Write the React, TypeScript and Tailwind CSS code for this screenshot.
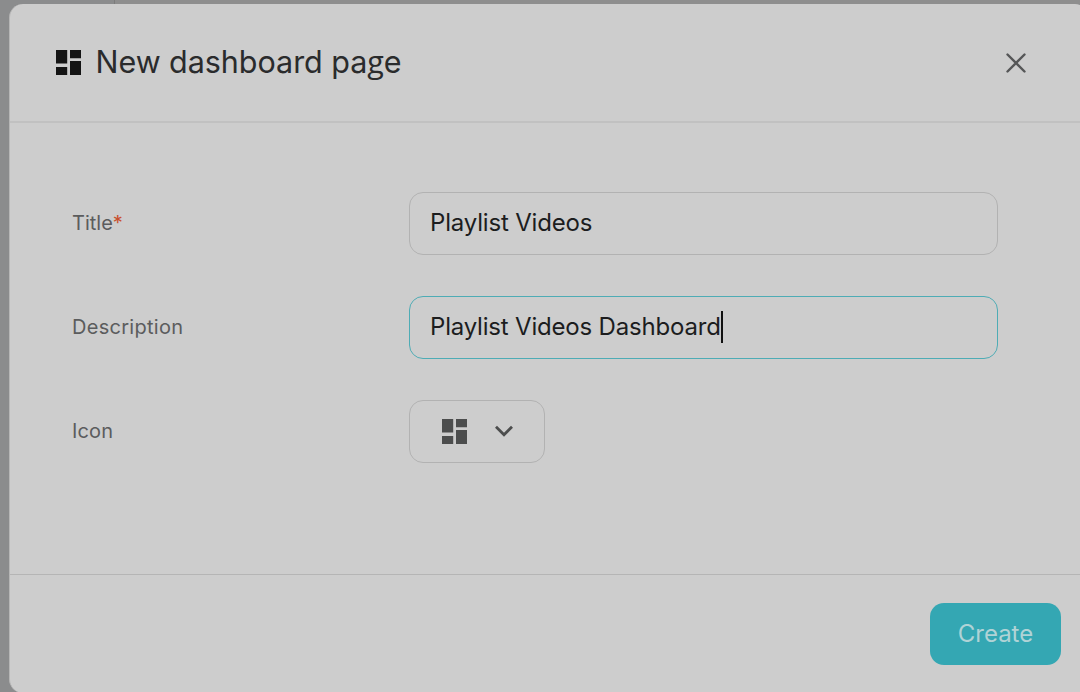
import React from 'react';

function DashboardIcon({ className }: { className: string }) {
  return (
    <svg viewBox="0 0 25 25" className={className} fill="currentColor">
      <path d="M0 0h11.2v13.4H0zM14 0h11v8.2H14zM0 17h11.2v8H0zM14 11h11v14H14z" />
    </svg>
  );
}

function Row({ label, required, children }: { label: React.ReactNode; required?: boolean; children: React.ReactNode }) {
  return (
    <div className="flex h-[62.5px] items-center">
      <div className="w-[336.5px] shrink-0 pb-px text-[20px] leading-[30px] text-[#5b5c5d]">
        {label}
        {required && <span className="text-[#c9502f]">*</span>}
      </div>
      {children}
    </div>
  );
}

const field = 'flex h-[62.5px] w-[589.5px] items-center rounded-[14px] border-[1.5px] pb-px pl-[20.5px] text-[24px] leading-[32px] text-[#1c1d1e]';

export default function App() {
  return (
    <div className="flex h-[692px] w-[1080px] flex-col overflow-hidden bg-[#8b8c8d] font-['Inter',sans-serif]">
      <div className="flex h-1 shrink-0 bg-[#8e8e8e]">
        <div className="w-[115px] border-r border-[#7c7c7c] bg-[#8b8c8d]" />
      </div>
      <section className="ml-[9px] flex h-[689px] w-[1080px] shrink-0 flex-col rounded-[14px] border-l border-[#b6b6b6] bg-[#cdcdcd]">
        <header className="flex h-[119px] shrink-0 items-center border-b-2 border-[#c1c1c1] pl-[46px]">
          <DashboardIcon className="h-[25px] w-[25px] text-[#141414]" />
          <h1 className="ml-[14.5px] pb-[3px] text-[30.5px] font-normal leading-[40px] tracking-[-0.04px] text-[#2a2b2c]">
            New dashboard pa<span className="font-['Open_Sans']">g</span>e
          </h1>
          <button className="ml-auto mr-[63px]" aria-label="Close">
            <svg viewBox="0 0 20 20" className="h-5 w-5" fill="none" stroke="#555657" strokeWidth="2.4" strokeLinecap="round">
              <path d="M1.5 1.5l17 17M18.5 1.5l-17 17" />
            </svg>
          </button>
        </header>
        <main className="flex flex-1 flex-col gap-[41.5px] pl-[62px] pt-[69px]">
          <Row label={<span className="tracking-[0px]">Title</span>} required>
            <div className={field + ' border-[#b2b2b2]'}>
              <span className="tracking-[-0.17px]">Playlist Videos</span>
            </div>
          </Row>
          <Row label={<span className="tracking-[0.28px]">Description</span>}>
            <div className={field + ' border-[#4eacb5]'}>
              <span className="tracking-[-0.19px]">Playlist Videos Dashboard</span>
              <span className="h-8 w-0.5 bg-[#111]" />
            </div>
          </Row>
          <Row label={<span className="tracking-[0.15px]">Icon</span>}>
            <button className="flex h-[62.5px] w-[136.5px] items-center rounded-[14px] border-[1.5px] border-[#b2b2b2] pl-[32.5px]">
              <DashboardIcon className="h-[25px] w-[25px] text-[#4c4d4d]" />
              <svg viewBox="0 0 18 12" className="mb-px ml-[28px] h-3 w-[18px]" fill="none" stroke="#4c4d4d" strokeWidth="2.8">
                <path d="M1 1.8l8 8 8-8" />
              </svg>
            </button>
          </Row>
        </main>
        <footer className="flex h-[119px] shrink-0 items-start border-t border-[#b5b5b5] pl-[920px] pt-7">
          <button className="h-[62px] w-[131px] rounded-[14px] bg-[#34a7b3] pb-px text-[24px] font-normal leading-[61px] text-[#b0d3d6]">
            Create
          </button>
        </footer>
      </section>
    </div>
  );
}
